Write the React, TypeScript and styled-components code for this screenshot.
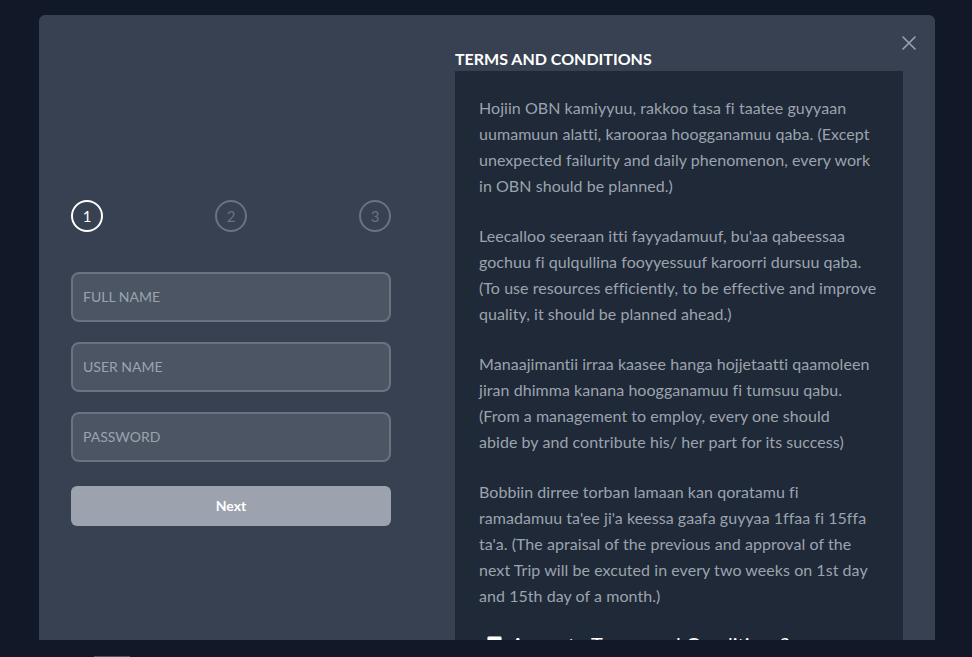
import styled, { createGlobalStyle } from 'styled-components'

export default function App() {
	const paragraphs = [
		'Hojiin OBN kamiyyuu, rakkoo tasa fi taatee guyyaan uumamuun alatti, karooraa hoogganamuu qaba. (Except unexpected failurity and daily phenomenon, every work in OBN should be planned.)',
		"Leecalloo seeraan itti fayyadamuuf, bu'aa qabeessaa gochuu fi qulqullina fooyyessuuf karoorri dursuu qaba. (To use resources efficiently, to be effective and improve quality, it should be planned ahead.)",
		<>
			Manaajimantii irraa kaasee hanga hojjetaatti qaamoleen jiran dhimma kanana
			hoogganamuu fi tumsuu qabu. (From a management to employ, every one should{' '}
			<NoWrap>abide by</NoWrap> and contribute his/ her part for its success)
		</>,
		"Bobbiin dirree torban lamaan kan qoratamu fi ramadamuu ta'ee ji'a keessa gaafa guyyaa 1ffaa fi 15ffa ta'a. (The apraisal of the previous and approval of the next Trip will be excuted in every two weeks on 1st day and 15th day of a month.)",
	]

	return (
		<>
			<GlobalStyle />
			<Page>
				<Modal>
					<CloseButton aria-label="close">
						<svg width="14" height="14" viewBox="0 0 14 14">
							<path
								d="M1 1 L13 13 M13 1 L1 13"
								stroke="currentColor"
								strokeWidth="1.6"
								strokeLinecap="round"
							/>
						</svg>
					</CloseButton>

					{/* Sign up form */}
					<FormColumn>
						<Stepper>
							<StepCircle $active>1</StepCircle>
							<StepCircle>2</StepCircle>
							<StepCircle>3</StepCircle>
						</Stepper>
						<Fields>
							<Field placeholder="FULL NAME" />
							<Field placeholder="USER NAME" />
							<Field placeholder="PASSWORD" type="password" />
						</Fields>
						<NextButton>Next</NextButton>
					</FormColumn>

					{/* Terms */}
					<TermsColumn>
						<TermsTitle>TERMS AND CONDITIONS</TermsTitle>
						<TermsPanel>
							{paragraphs.map((p, i) => (
								<TermsText key={i}>{p}</TermsText>
							))}
							<AgreeRow>
								<AgreeBox />
								Agree to Terms and Conditions?
							</AgreeRow>
						</TermsPanel>
					</TermsColumn>
				</Modal>
				<Footer>
					<ScrollThumb />
				</Footer>
			</Page>
		</>
	)
}

const GlobalStyle = createGlobalStyle`
	html, body {
		margin: 0;
		padding: 0;
		background: #111827;
		font-family: Lato, 'Open Sans', sans-serif;
		font-variant-ligatures: none;
	}
	* {
		box-sizing: border-box;
	}
`

const Page = styled.div`
	height: 657px;
	overflow: hidden;
	display: flex;
	flex-direction: column;
	padding-top: 15px;
`

const Modal = styled.div`
	position: relative;
	width: 896px;
	height: 625px;
	margin-left: 39px;
	padding: 32px 32px 0 32px;
	background: #374151;
	border-radius: 6px 6px 0 0;
	overflow: hidden;
	display: flex;
`

const CloseButton = styled.button`
	position: absolute;
	top: 21px;
	right: 19px;
	padding: 0;
	border: none;
	background: none;
	color: #9ca3af;
	display: flex;
	cursor: pointer;
`

const FormColumn = styled.div`
	width: 384px;
	flex-shrink: 0;
	padding-top: 153px;
	display: flex;
	flex-direction: column;
`

const Stepper = styled.div`
	width: 320px;
	display: flex;
	justify-content: space-between;
	margin-bottom: 40px;
`

const StepCircle = styled.div<{ $active?: boolean }>`
	width: 32px;
	height: 32px;
	border-radius: 50%;
	border: 2px solid ${(p) => (p.$active ? '#ffffff' : '#6b7280')};
	color: ${(p) => (p.$active ? '#ffffff' : '#6b7280')};
	font-size: 15px;
	display: flex;
	align-items: center;
	justify-content: center;
`

const Fields = styled.div`
	width: 320px;
	display: flex;
	flex-direction: column;
	gap: 20px;
`

const Field = styled.input`
	height: 50px;
	width: 100%;
	padding: 0 10px 1px 10px;
	border: 2px solid #6b7280;
	border-radius: 8px;
	background: #4b5563;
	color: #f3f4f6;
	font-family: Lato, 'Open Sans', sans-serif;
	font-size: 14px;
	outline: none;

	&::placeholder {
		color: #9ca3af;
	}
`

const NextButton = styled.button`
	width: 320px;
	height: 40px;
	margin-top: 24px;
	padding-bottom: 2px;
	border: none;
	border-radius: 6px;
	background: #9ca3af;
	color: #ffffff;
	font-family: Lato, 'Open Sans', sans-serif;
	font-size: 14px;
	font-weight: 700;
	cursor: pointer;
`

const TermsColumn = styled.div`
	width: 448px;
	display: flex;
	flex-direction: column;
`

const TermsTitle = styled.h3`
	margin: 0;
	color: #ffffff;
	font-size: 16px;
	font-weight: 700;
	line-height: 24px;
`

const TermsPanel = styled.div`
	background: #1f2937;
	padding: 24px 24px 0 24px;
	display: flex;
	flex-direction: column;
	gap: 24px;
`

const TermsText = styled.p`
	margin: 0;
	color: #9ca3af;
	font-size: 16px;
	line-height: 26px;
	letter-spacing: 0.05px;
`

const NoWrap = styled.span`
	white-space: nowrap;
`

const AgreeRow = styled.label`
	display: flex;
	align-items: flex-start;
	gap: 9px;
	padding-left: 8px;
	margin-top: -3px;
	color: #ffffff;
	font-size: 20px;
	line-height: 28px;
`

const AgreeBox = styled.span`
	width: 15px;
	height: 15px;
	margin-top: 6px;
	flex-shrink: 0;
	background: #ffffff;
	border: 1px solid #9ca3af;
	border-radius: 2px;
`

const Footer = styled.div`
	flex: 1;
	display: flex;
	align-items: flex-end;
	padding-left: 94px;
`

const ScrollThumb = styled.div`
	width: 36px;
	height: 1px;
	background: #4b5563;
`
